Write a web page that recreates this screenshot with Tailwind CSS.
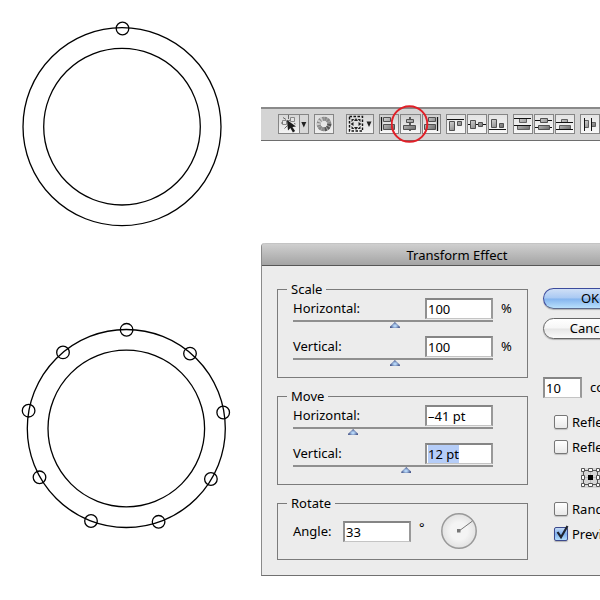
<!DOCTYPE html>
<html lang="en">
<head>
<meta charset="utf-8">
<title>Transform Effect</title>
<script src="https://cdn.jsdelivr.net/npm/@tailwindcss/browser@4"></script>
</head>
<body class="bg-white overflow-x-hidden text-black text-[13px] leading-[18px] font-['Noto_Sans','Open_Sans',sans-serif]">
<main class="grid grid-cols-[261px_1fr] overflow-hidden">
  <section class="flex flex-col gap-[50px]" aria-label="Artwork">
    <svg class="w-[250px] h-[250px]" viewBox="0 0 250 250" fill="none" stroke="#000" stroke-width="1.3">
      <circle cx="122" cy="126.700" r="99"/><circle cx="122" cy="126.700" r="78.3"/><circle cx="122.5" cy="28.5" r="6.3"/>
    </svg>
    <svg class="w-[250px] h-[250px]" viewBox="0 0 250 250" fill="none" stroke="#000" stroke-width="1.3">
      <circle cx="126.3" cy="128.5" r="99"/><circle cx="126.3" cy="128.5" r="78.3"/>
      <circle cx="126.6" cy="29.8" r="6.3"/><circle cx="190" cy="53.6" r="6.3"/><circle cx="223.2" cy="112.5" r="6.3"/>
      <circle cx="210.9" cy="179" r="6.3"/><circle cx="158.6" cy="221.8" r="6.3"/><circle cx="91" cy="221" r="6.3"/>
      <circle cx="39.5" cy="177.3" r="6.3"/><circle cx="28.6" cy="110.7" r="6.3"/><circle cx="63" cy="52.4" r="6.3"/>
    </svg>
  </section>

  <section class="min-w-0 pt-[107px]">
    <svg class="absolute w-0 h-0" aria-hidden="true">
      <defs>
        <linearGradient id="bar" x1="0" y1="0" x2="1" y2="1"><stop offset="0" stop-color="#d2d2d2"/><stop offset="1" stop-color="#6c6c6c"/></linearGradient>
      </defs>
    </svg>
    <div class="flex items-start h-[34px] pt-[5px] pl-[17px] bg-[#d4d4d4] border-t-2 border-b border-t-[#8a8a8a] border-b-[#6e6e6e]" role="toolbar" aria-label="Control bar">
      <button aria-label="Isolate selection" class="shrink-0 flex w-[31px] h-5 border border-[#858585] bg-linear-to-b from-[#d6d6d6] to-[#f4f4f4]">
        <svg class="w-[29px] h-[18px]" viewBox="0 0 29 18" fill="none">
          <path d="M20.500 0v18" stroke="#858585"/><path d="M21 0h8v18h-8z" fill="#d8d8d8"/>
          <path d="M3.500 5.500h4v4h-4zM11.500 2.500h4v4h-4z" stroke="#888" fill="#e4e4e4"/>
          <path d="M7.500 6.500l4-1.500M4 2.500l3 2M9.500 0v4M5.500 13.500l3-3M2 8h2M15 8.500l1.500.500" stroke="#666"/>
          <path d="M8 5l9 6.500-3.600.5 2.700 4-2.200 1.400-2.500-4.300-2.400 2.400z" fill="#1c1c1c"/>
          <path d="M22.300 7h5l-2.500 5.500z" fill="#222"/>
        </svg>
      </button>
      <button aria-label="Recolor artwork" class="shrink-0 ml-[5px] w-5 h-5 border border-[#858585] bg-linear-to-b from-[#dedede] to-[#efefef]">
        <svg class="w-[18px] h-[18px]" viewBox="0 0 18 18" fill="none" stroke-width="4">
          <circle cx="9" cy="9" r="5.300" stroke="#a5a5a5"/>
          <circle cx="9" cy="9" r="5.300" stroke="#888" stroke-dasharray="1.8 0.98"/>
          <path d="M4 10A5.300 5.300 0 0 1 8 3.800" stroke="#ccc" stroke-dasharray="1.8 1"/>
          <path d="M14.300 9A5.300 5.300 0 0 1 9 14.300" stroke="#555" stroke-dasharray="1.8 1"/>
        </svg>
      </button>
      <button aria-label="Align to" class="shrink-0 ml-3 w-[28px] h-5 border border-[#858585] bg-linear-to-b from-[#d6d6d6] to-[#f2f2f2]">
        <svg class="w-[26px] h-[18px]" viewBox="0 0 26 18" fill="none">
          <path d="M2.500 1.500h13v14.500h-13z" stroke="#111" stroke-width="1.400" stroke-dasharray="2.500 1.500"/>
          <path d="M9 3l2 3h-4zM9 15l2-3h-4zM3.500 9l3-2v4zM14.500 9l-3-2v4zM4.500 4h3l-3 3zM13.500 4v3l-3-3zM4.500 14v-3l3 3zM13.500 14h-3l3-3z" fill="#222"/>
          <path d="M19.500 6.500h5l-2.500 5.500z" fill="#222"/>
        </svg>
      </button>
      <div class="shrink-0 flex gap-px ml-[5px]">
        <button aria-label="Align left" class="w-5 h-5 border border-[#858585] bg-linear-to-b from-[#cfcfcf] to-[#f8f8f8]">
          <svg class="w-[18px] h-[18px]" viewBox="0 0 18 18"><path d="M1.500 2v14" stroke="#111" stroke-width="1.300"/><g fill="url(#bar)" stroke="#505050"><path d="M3.500 2.500h7v4h-7zM3.500 9.500h11v5h-11z"/></g></svg>
        </button>
        <span class="relative">
          <button aria-label="Align centre" class="block w-[21px] h-5 border border-[#858585] bg-linear-to-b from-[#cfcfcf] to-[#f8f8f8]">
            <svg class="w-[18px] h-[18px]" viewBox="0 0 18 18"><path d="M9 2v14" stroke="#111" stroke-width="1.300"/><g fill="url(#bar)" stroke="#505050"><path d="M5.500 4.500h7v3h-7zM2.500 10.500h12v4h-12z"/></g></svg>
          </button>
          <svg class="absolute -left-[9px] -top-[9px] w-[38px] h-[38px] z-10 pointer-events-none" viewBox="0 0 38 38" fill="none"><circle cx="18.500" cy="19" r="17.800" stroke="#e02028" stroke-width="2"/></svg>
        </span>
        <button aria-label="Align right" class="w-[19px] h-5 border border-[#858585] bg-linear-to-b from-[#cfcfcf] to-[#f8f8f8]">
          <svg class="w-[17px] h-[18px]" viewBox="0 0 17 18"><path d="M14.500 2v14" stroke="#111" stroke-width="1.300"/><g fill="url(#bar)" stroke="#505050"><path d="M5.500 2.500h7v4h-7zM1.500 9.500h11v5h-11z"/></g></svg>
        </button>
      </div>
      <div class="shrink-0 flex gap-px ml-[5px]">
        <button aria-label="Align top" class="w-5 h-5 border border-[#858585] bg-linear-to-b from-[#e4e4e4] to-[#f8f8f8]">
          <svg class="w-[18px] h-[18px]" viewBox="0 0 18 18"><path d="M0 4.500h17" stroke="#111"/><g fill="url(#bar)" stroke="#505050"><path d="M2.500 6.500h5v9h-5zM10.500 6.500h4v4h-4z"/></g></svg>
        </button>
        <button aria-label="Align middle" class="w-5 h-5 border border-[#858585] bg-linear-to-b from-[#e4e4e4] to-[#f8f8f8]">
          <svg class="w-[18px] h-[18px]" viewBox="0 0 18 18"><path d="M0 9.500h18" stroke="#111"/><g fill="url(#bar)" stroke="#505050"><path d="M2.500 5.500h5v8h-5zM10.500 7.500h4v4h-4z"/></g></svg>
        </button>
        <button aria-label="Align bottom" class="w-5 h-5 border border-[#858585] bg-linear-to-b from-[#e4e4e4] to-[#f8f8f8]">
          <svg class="w-[18px] h-[18px]" viewBox="0 0 18 18"><path d="M0 14.500h17" stroke="#111"/><g fill="url(#bar)" stroke="#505050"><path d="M2.500 4.500h5v8h-5zM10.500 8.500h4v4h-4z"/></g></svg>
        </button>
      </div>
      <div class="shrink-0 flex gap-px ml-[5px]">
        <button aria-label="Distribute top" class="w-5 h-5 border border-[#858585] bg-linear-to-b from-[#e4e4e4] to-[#f8f8f8]">
          <svg class="w-[18px] h-[18px]" viewBox="0 0 18 18"><g fill="url(#bar)" stroke="#606060"><path d="M5.500 3.500h7v4h-7zM3.500 10.500h12v4h-12z"/></g><path d="M0 3.500h17M0 10.500h17" stroke="#111"/></svg>
        </button>
        <button aria-label="Distribute middle" class="w-5 h-5 border border-[#858585] bg-linear-to-b from-[#e4e4e4] to-[#f8f8f8]">
          <svg class="w-[18px] h-[18px]" viewBox="0 0 18 18"><path d="M0 5.500h17M0 12.500h17" stroke="#111"/><g fill="url(#bar)" stroke="#505050"><path d="M5.500 3.500h7v4h-7zM3.500 10.500h11v4h-11z"/></g></svg>
        </button>
        <button aria-label="Distribute bottom" class="w-5 h-5 border border-[#858585] bg-linear-to-b from-[#e4e4e4] to-[#f8f8f8]">
          <svg class="w-[18px] h-[18px]" viewBox="0 0 18 18"><g fill="url(#bar)" stroke="#606060"><path d="M5.500 4.500h6v3h-6zM3.500 10.500h11v4h-11z"/></g><path d="M0 7.500h17M0 14.500h17" stroke="#111"/></svg>
        </button>
      </div>
      <button aria-label="Distribute left" class="shrink-0 ml-[5px] w-5 h-5 border border-[#858585] bg-linear-to-b from-[#e4e4e4] to-[#f8f8f8]">
        <svg class="w-[18px] h-[18px]" viewBox="0 0 18 18"><g fill="url(#bar)" stroke="#606060"><path d="M3.500 5.500h4v7h-4zM10.500 7.500h4v4h-4z"/></g><path d="M3.500 3v13M10.500 3v13" stroke="#111"/></svg>
      </button>
    </div>

    <form class="mt-[102px] w-[391px] bg-[#ececec] border-l border-b border-[#8a8a8a] border-b-[#707070] rounded-tl-[4px]" aria-labelledby="title">
      <h1 id="title" class="h-[23px] pt-[2px] text-center rounded-tl-[4px] border-t border-t-[#c4c4c4] border-b border-b-[#565656] bg-linear-to-b from-[#cfcfcf] to-[#a4a4a4]">Transform Effect</h1>
      <div class="flex px-[15px] pt-[14px] pb-[15px]">
        <div class="flex flex-col gap-[9px] w-[251px] shrink-0">
          <fieldset class="border border-[#7b7b7b] pl-[9px] h-[98px]">
            <legend class="px-1">Scale</legend>
            <div class="flex flex-col gap-2 pl-[6px]">
              <div>
                <div class="flex items-center h-[21px]">
                  <label for="sh" class="w-[132px] pb-px">Horizontal:</label>
                  <input id="sh" value="100" class="w-[68px] h-[21px] px-px bg-white border-2 border-b border-t-[#858585] border-l-[#909090] border-r-[#999] border-b-[#c4c4c4]">
                  <span class="ml-2 pb-px">%</span>
                </div>
                <input type="range" aria-label="Horizontal scale" value="51" class="block mt-px appearance-none w-[200px] h-2 bg-[linear-gradient(#8f8f8f,#8f8f8f)] bg-[length:100%_2px] bg-no-repeat pt-[2px] [&::-webkit-slider-thumb]:appearance-none [&::-webkit-slider-thumb]:w-[10px] [&::-webkit-slider-thumb]:h-[6px] [&::-webkit-slider-thumb]:bg-[radial-gradient(ellipse_at_50%_65%,#b4d4f6_15%,#48588c_65%)] [&::-webkit-slider-thumb]:[clip-path:polygon(50%_0,100%_80%,100%_100%,0_100%,0_80%)]">
              </div>
              <div>
                <div class="flex items-center h-[21px]">
                  <label for="sv" class="w-[132px] pb-px">Vertical:</label>
                  <input id="sv" value="100" class="w-[68px] h-[21px] px-px bg-white border-2 border-b border-t-[#858585] border-l-[#909090] border-r-[#999] border-b-[#c4c4c4]">
                  <span class="ml-2 pb-px">%</span>
                </div>
                <input type="range" aria-label="Vertical scale" value="51" class="block mt-px appearance-none w-[200px] h-2 bg-[linear-gradient(#8f8f8f,#8f8f8f)] bg-[length:100%_2px] bg-no-repeat pt-[2px] [&::-webkit-slider-thumb]:appearance-none [&::-webkit-slider-thumb]:w-[10px] [&::-webkit-slider-thumb]:h-[6px] [&::-webkit-slider-thumb]:bg-[radial-gradient(ellipse_at_50%_65%,#b4d4f6_15%,#48588c_65%)] [&::-webkit-slider-thumb]:[clip-path:polygon(50%_0,100%_80%,100%_100%,0_100%,0_80%)]">
              </div>
            </div>
          </fieldset>
          <fieldset class="border border-[#7b7b7b] pl-[9px] h-[98px]">
            <legend class="px-1">Move</legend>
            <div class="flex flex-col gap-2 pl-[6px]">
              <div>
                <div class="flex items-center h-[21px]">
                  <label for="mh" class="w-[132px] pb-px">Horizontal:</label>
                  <input id="mh" value="–41 pt" class="w-[68px] h-[21px] px-px bg-white border-2 border-b border-t-[#858585] border-l-[#909090] border-r-[#999] border-b-[#c4c4c4]">
                </div>
                <input type="range" aria-label="Horizontal move" value="29" class="block mt-px appearance-none w-[200px] h-2 bg-[linear-gradient(#8f8f8f,#8f8f8f)] bg-[length:100%_2px] bg-no-repeat pt-[2px] [&::-webkit-slider-thumb]:appearance-none [&::-webkit-slider-thumb]:w-[10px] [&::-webkit-slider-thumb]:h-[6px] [&::-webkit-slider-thumb]:bg-[radial-gradient(ellipse_at_50%_65%,#b4d4f6_15%,#48588c_65%)] [&::-webkit-slider-thumb]:[clip-path:polygon(50%_0,100%_80%,100%_100%,0_100%,0_80%)]">
              </div>
              <div>
                <div class="flex items-center h-[21px]">
                  <label for="mv" class="w-[132px] pb-px">Vertical:</label>
                  <input id="mv" value="12 pt" class="w-[68px] h-[21px] px-px bg-white outline-none selection:bg-[#b5cdf8] selection:text-black border-2 border-b border-t-[#858585] border-l-[#909090] border-r-[#999] border-b-[#c4c4c4]">
                </div>
                <input type="range" aria-label="Vertical move" value="57" class="block mt-px appearance-none w-[200px] h-2 bg-[linear-gradient(#8f8f8f,#8f8f8f)] bg-[length:100%_2px] bg-no-repeat pt-[2px] [&::-webkit-slider-thumb]:appearance-none [&::-webkit-slider-thumb]:w-[10px] [&::-webkit-slider-thumb]:h-[6px] [&::-webkit-slider-thumb]:bg-[radial-gradient(ellipse_at_50%_65%,#b4d4f6_15%,#48588c_65%)] [&::-webkit-slider-thumb]:[clip-path:polygon(50%_0,100%_80%,100%_100%,0_100%,0_80%)]">
              </div>
            </div>
          </fieldset>
          <fieldset class="border border-[#7b7b7b] pl-[9px] h-[66px]">
            <legend class="px-1">Rotate</legend>
            <div class="flex items-center pl-[6px] pt-px">
              <label for="angle" class="w-[50px] pb-px">Angle:</label>
              <input id="angle" value="33" class="w-[68px] h-[21px] px-px bg-white border-2 border-b border-t-[#858585] border-l-[#909090] border-r-[#999] border-b-[#c4c4c4]">
              <span class="w-[30px] pl-2 pb-2">°</span>
              <svg class="w-9 h-9" viewBox="0 0 36 36"><defs><radialGradient id="dial"><stop offset=".5" stop-color="#f4f4f4"/><stop offset="1" stop-color="#e2e2e2"/></radialGradient></defs><circle cx="18" cy="18" r="17.200" fill="url(#dial)" stroke="#999" stroke-width="1.500"/><path d="M18 18L31.500 8" stroke="#777"/><path d="M16 16h3.500v3.500h-3.500z" fill="#777"/></svg>
            </div>
          </fieldset>
        </div>

        <div class="flex flex-col w-[94px] shrink-0 ml-[15px] pt-2">
          <button type="button" class="w-[94px] h-[21px] pb-[2px] rounded-full border border-[#3c4a9c] border-b-[#5c6a8c] shadow-[0_1px_1px_#00000040] bg-[linear-gradient(#cfdff6,#a9c9f3_48%,#84b4ee_52%,#b9e0fc)]">OK</button>
          <button type="button" class="mt-[9px] w-[94px] h-[21px] pb-[2px] rounded-full border border-[#666] shadow-[0_1px_1px_#00000040] bg-[linear-gradient(#fff,#f6f6f6_48%,#e6e6e6_52%,#fafafa)]">Cancel</button>
          <div class="flex items-center mt-[38px]">
            <input id="copies" value="10" class="w-[39px] h-[21px] px-px bg-white border-2 border-b border-t-[#858585] border-l-[#909090] border-r-[#999] border-b-[#c4c4c4]">
            <label for="copies" class="ml-2 pb-px">copies</label>
          </div>
          <div class="flex flex-col gap-[7px] mt-[15px] pl-[11px]">
            <label class="flex items-center gap-1 whitespace-nowrap"><input type="checkbox" class="appearance-none w-[14px] h-[14px] rounded-[2px] border border-[#777] shadow-[0_1px_1px_#00000030] bg-linear-to-b from-white to-[#e9e9e9]">Reflect X</label>
            <label class="flex items-center gap-1 whitespace-nowrap"><input type="checkbox" class="appearance-none w-[14px] h-[14px] rounded-[2px] border border-[#777] shadow-[0_1px_1px_#00000030] bg-linear-to-b from-white to-[#e9e9e9]">Reflect Y</label>
          </div>
          <svg class="mt-3 ml-[38px] w-[20px] h-[20px]" viewBox="0 0 20 20" fill="none"><path d="M0 0h20v20H0z" fill="#d6d6d6"/><path d="M2.500 2.500h14v14h-14z" stroke="#555"/><path d="M9.500 4v12M4 9.500h12" stroke="#bbb"/><path fill="#fff" stroke="#555" d="M.5.500h3v3h-3zM7.500.500h4v3h-4zM15.500.500h3v3h-3zM.5 7.500h3v4h-3zM15.500 7.500h3v4h-3zM.5 15.500h3v3h-3zM7.500 15.500h4v3h-4zM15.500 15.500h3v3h-3z"/><path d="M7 7h5v5H7z" fill="#000"/></svg>
          <div class="flex flex-col gap-[7px] mt-3 pl-[11px]">
            <label class="flex items-center gap-1 whitespace-nowrap"><input type="checkbox" class="appearance-none w-[14px] h-[14px] rounded-[2px] border border-[#777] shadow-[0_1px_1px_#00000030] bg-linear-to-b from-white to-[#e9e9e9]">Random</label>
            <label class="relative flex items-center gap-1 whitespace-nowrap"><input type="checkbox" checked class="appearance-none w-[14px] h-[14px] rounded-[2px] border border-[#3c4a8c] shadow-[0_1px_1px_#00000040] bg-[linear-gradient(#c4daf6,#7fb0ee_50%,#b4defc)]">Preview
              <svg class="absolute left-0 top-0 w-4 h-4 pointer-events-none" viewBox="0 0 16 16" fill="none"><path d="M3.500 7l3.500 5.200L13.500 1" stroke="#1e2430" stroke-width="2.200"/></svg></label>
          </div>
        </div>
      </div>
    </form>
  </section>
</main>
<script>
  const field = document.getElementById('mv');
  field.focus();
  field.select();
</script>
</body>
</html>
